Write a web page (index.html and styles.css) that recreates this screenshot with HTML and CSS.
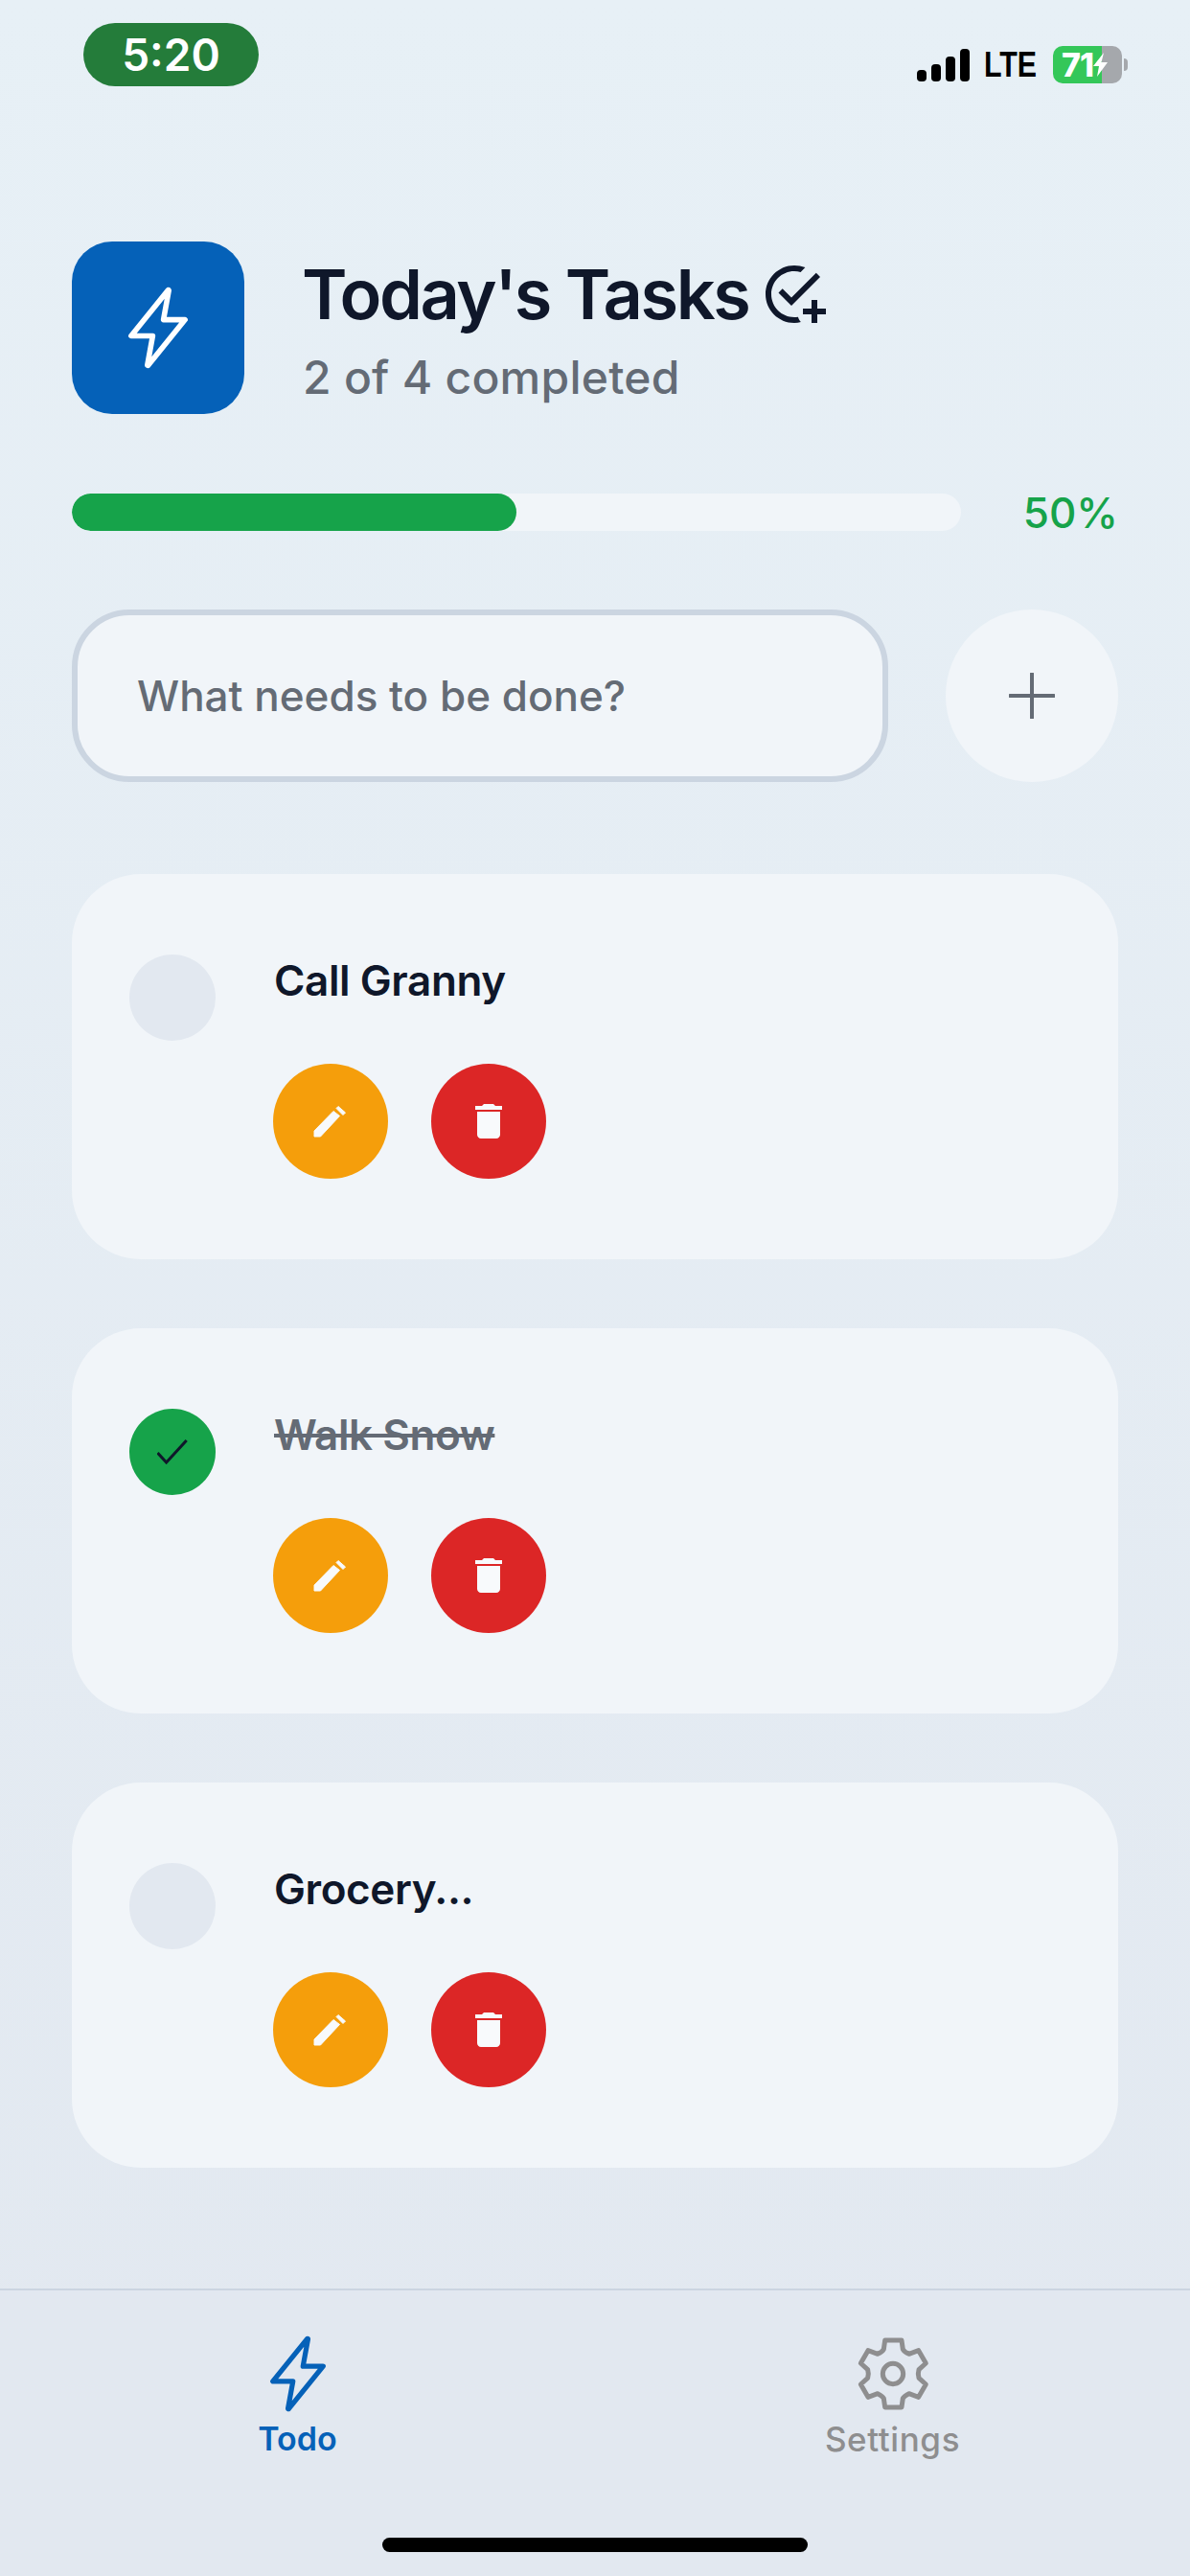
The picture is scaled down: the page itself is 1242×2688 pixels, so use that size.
FILE: index.html
```html
<!DOCTYPE html>
<html lang="en">
<head>
    <meta charset="UTF-8">
    <meta name="viewport" content="width=device-width, initial-scale=1.0">
    <title>Today's Tasks</title>
    <link rel="stylesheet" href="styles.css">
</head>
<body>
    <div class="app">
        <!-- Status bar -->
        <div class="status-bar">
            <div class="time-pill">5:20</div>
            <div class="status-right">
                <div class="signal">
                    <span class="bar bar-1"></span>
                    <span class="bar bar-2"></span>
                    <span class="bar bar-3"></span>
                    <span class="bar bar-4"></span>
                </div>
                <span class="lte">LTE</span>
                <div class="battery">
                    <div class="battery-body">
                        <span class="battery-num">71</span>
                        <svg class="battery-bolt" viewBox="0 0 15 25"><path d="M11 0 0 14h6L4 25l11-15H8.5z" fill="#fff"/></svg>
                    </div>
                    <span class="battery-cap"></span>
                </div>
            </div>
        </div>

        <main class="content">
            <!-- Header -->
            <header class="header">
                <div class="logo">
                    <svg class="logo-icon" viewBox="0 0 512 512"><path d="M315.27 33 96 304h128l-31.51 173.23a2.36 2.36 0 0 0 2.33 2.77h0a2.36 2.36 0 0 0 1.89-.95L416 208H288l31.66-173.25a2.45 2.45 0 0 0-2.44-2.75h0a2.42 2.42 0 0 0-1.95 1z"/></svg>
                </div>
                <div class="header-text">
                    <div class="title-row">
                        <h1 class="title">Today's Tasks</h1>
                        <svg class="title-icon" viewBox="0 0 24 24"><path d="M14.3 21.7C13.6 21.9 12.8 22 12 22C6.5 22 2 17.5 2 12S6.5 2 12 2C13.3 2 14.6 2.3 15.8 2.7L14.2 4.3C13.5 4.1 12.8 4 12 4C7.6 4 4 7.6 4 12S7.6 20 12 20C12.4 20 12.9 20 13.3 19.9C13.5 20.6 13.9 21.2 14.3 21.7M7.9 10.1L6.5 11.5L11 16L21 6L19.6 4.6L11 13.2L7.9 10.1M18 14V17H15V19H18V22H20V19H23V17H20V14H18Z"/></svg>
                    </div>
                    <p class="subtitle">2 of 4 completed</p>
                </div>
            </header>

            <!-- Progress -->
            <div class="progress-row">
                <div class="progress-track"><div class="progress-fill"></div></div>
                <span class="progress-label">50%</span>
            </div>

            <!-- New task -->
            <div class="add-row">
                <div class="task-input">What needs to be done?</div>
                <button class="add-btn">
                    <svg viewBox="0 0 48 48"><path d="M24 1v46M1 24h46"/></svg>
                </button>
            </div>

            <!-- Task list -->
            <section class="task-list">
                <article class="task-card">
                    <span class="check"></span>
                    <div class="task-body">
                        <div class="task-name">Call Granny</div>
                        <div class="task-actions">
                            <button class="round-btn edit"><svg class="edit-icon" viewBox="0 0 36 34"><path d="M1 27 21 6.5 27.5 11.5 7.5 33H1zM24 3.5 26 1.5 33.5 8 31 10.5z"/></svg></button>
                            <button class="round-btn remove"><svg class="remove-icon" viewBox="0 0 24 24"><path d="M6 19c0 1.1.9 2 2 2h8c1.1 0 2-.9 2-2V7H6v12zM19 4h-3.5l-1-1h-5l-1 1H5v2h14V4z"/></svg></button>
                        </div>
                    </div>
                </article>

                <article class="task-card">
                    <span class="check done">
                        <svg viewBox="0 0 32 26"><path d="M.5 14 9.6 24 30.7 1"/></svg>
                    </span>
                    <div class="task-body">
                        <div class="task-name struck">Walk Snow</div>
                        <div class="task-actions">
                            <button class="round-btn edit"><svg class="edit-icon" viewBox="0 0 36 34"><path d="M1 27 21 6.5 27.5 11.5 7.5 33H1zM24 3.5 26 1.5 33.5 8 31 10.5z"/></svg></button>
                            <button class="round-btn remove"><svg class="remove-icon" viewBox="0 0 24 24"><path d="M6 19c0 1.1.9 2 2 2h8c1.1 0 2-.9 2-2V7H6v12zM19 4h-3.5l-1-1h-5l-1 1H5v2h14V4z"/></svg></button>
                        </div>
                    </div>
                </article>

                <article class="task-card">
                    <span class="check"></span>
                    <div class="task-body">
                        <div class="task-name">Grocery...</div>
                        <div class="task-actions">
                            <button class="round-btn edit"><svg class="edit-icon" viewBox="0 0 36 34"><path d="M1 27 21 6.5 27.5 11.5 7.5 33H1zM24 3.5 26 1.5 33.5 8 31 10.5z"/></svg></button>
                            <button class="round-btn remove"><svg class="remove-icon" viewBox="0 0 24 24"><path d="M6 19c0 1.1.9 2 2 2h8c1.1 0 2-.9 2-2V7H6v12zM19 4h-3.5l-1-1h-5l-1 1H5v2h14V4z"/></svg></button>
                        </div>
                    </div>
                </article>
            </section>
        </main>

        <!-- Tab bar -->
        <nav class="tab-bar">
            <div class="tabs">
                <div class="tab active">
                    <svg class="tab-icon" viewBox="0 0 512 512"><path d="M315.27 33 96 304h128l-31.51 173.23a2.36 2.36 0 0 0 2.33 2.77h0a2.36 2.36 0 0 0 1.89-.95L416 208H288l31.66-173.25a2.45 2.45 0 0 0-2.44-2.75h0a2.42 2.42 0 0 0-1.95 1z"/></svg>
                    <span class="tab-label">Todo</span>
                </div>
                <div class="tab">
                    <svg class="tab-icon gear" viewBox="29 19 252 252">
                        <path d="M130 40H182L186 68Q190 76 205 83L235 72 258 112 236 132Q232 145 236 158L258 178 235 218 205 207Q190 214 186 222L182 250H130L126 222Q122 214 107 207L77 218 54 178 76 158Q80 145 76 132L54 112 77 72 107 83Q122 76 126 68Z"/>
                        <circle cx="155" cy="145" r="32"/>
                    </svg>
                    <span class="tab-label">Settings</span>
                </div>
            </div>
            <div class="home-indicator"></div>
        </nav>
    </div>
</body>
</html>
```

FILE: styles.css
```css
* {
    margin: 0;
    padding: 0;
    box-sizing: border-box;
    font-family: Inter, 'Noto Sans', sans-serif;
}

html, body {
    height: 100%;
}

.app {
    height: 2688px;
    display: flex;
    flex-direction: column;
    background: linear-gradient(180deg, #e7f0f6 0%, #e2e8f0 100%);
    overflow: hidden;
}

/* Status bar */
.status-bar {
    height: 252px;
    flex-shrink: 0;
    display: flex;
    justify-content: space-between;
    align-items: flex-start;
    padding: 24px 65px 0 87px;
}

.time-pill {
    width: 183px;
    height: 66px;
    border-radius: 33px;
    background: #247c3a;
    color: #fff;
    font-size: 46px;
    font-weight: 600;
    line-height: 66px;
    text-align: center;
}

.status-right {
    display: flex;
    align-items: center;
    margin-top: 24px;
    height: 39px;
}

.signal {
    display: flex;
    align-items: flex-end;
    gap: 5px;
    margin-right: 15px;
}

.bar {
    width: 10px;
    background: #000;
    border-radius: 4px;
}

.bar-1 { height: 12px; }
.bar-2 { height: 18px; }
.bar-3 { height: 26px; }
.bar-4 { height: 34px; }

.lte {
    width: 58px;
    font-family: 'Liberation Sans', sans-serif;
    font-size: 37px;
    font-weight: 700;
    line-height: 39px;
    color: #000;
    margin-right: 14px;
    transform: scaleX(0.82);
    transform-origin: left center;
}

.battery {
    display: flex;
    align-items: center;
}

.battery-body {
    width: 72px;
    height: 39px;
    border-radius: 10px;
    background: linear-gradient(90deg, #34c759 0%, #34c759 71%, #a5a8ac 71%, #a5a8ac 100%);
    display: flex;
    align-items: center;
    padding-left: 9px;
}

.battery-num {
    font-size: 34px;
    font-weight: 800;
    letter-spacing: -1px;
    color: #fff;
    line-height: 39px;
}

.battery-bolt {
    width: 15px;
    height: 25px;
    flex-shrink: 0;
}

.battery-cap {
    width: 4px;
    height: 13px;
    margin-left: 2px;
    border-radius: 0 4px 4px 0;
    background: #a5a8ac;
}

/* Main */
.content {
    flex: 1;
    padding: 0 75px;
}

.header {
    display: flex;
    align-items: flex-start;
    gap: 60px;
}

.logo {
    width: 180px;
    height: 180px;
    border-radius: 42px;
    background: #0561b8;
    display: flex;
    align-items: center;
    justify-content: center;
}

.logo-icon {
    width: 90px;
    height: 90px;
    fill: none;
    stroke: #fff;
    stroke-width: 32;
    stroke-linecap: round;
    stroke-linejoin: round;
}

.header-text {
    padding-top: 11px;
}

.title-row {
    display: flex;
    align-items: center;
    gap: 12px;
}

.title {
    font-size: 72px;
    font-weight: 600;
    letter-spacing: -2.4px;
    line-height: 88px;
    color: #0f172a;
}

.title-icon {
    width: 72px;
    height: 72px;
    fill: #0f172a;
}

.subtitle {
    font-size: 48px;
    font-weight: 500;
    letter-spacing: 0.25px;
    line-height: 58px;
    margin-top: 14px;
    padding-left: 1px;
    color: #646b75;
}

.progress-row {
    display: flex;
    align-items: center;
    margin-top: 83px;
    height: 39px;
}

.progress-track {
    width: 928px;
    height: 39px;
    border-radius: 20px;
    background: #f1f5f9;
    overflow: hidden;
}

.progress-fill {
    width: 50%;
    height: 100%;
    border-radius: 20px;
    background: #16a34a;
}

.progress-label {
    margin-left: auto;
    font-size: 44px;
    font-weight: 500;
    color: #16a34a;
}

.add-row {
    display: flex;
    justify-content: space-between;
    margin-top: 82px;
}

.task-input {
    width: 852px;
    height: 180px;
    border: 6px solid #cbd5e1;
    border-radius: 60px;
    background: #f1f5f9;
    padding-left: 62px;
    display: flex;
    align-items: center;
    font-size: 44px;
    font-weight: 500;
    color: #646b75;
}

.add-btn {
    width: 180px;
    height: 180px;
    border: none;
    border-radius: 50%;
    background: #f1f5f9;
    display: flex;
    align-items: center;
    justify-content: center;
}

.add-btn svg {
    width: 48px;
    height: 48px;
    fill: none;
    stroke: #646b75;
    stroke-width: 4;
    stroke-linecap: round;
}

.task-list {
    display: flex;
    flex-direction: column;
    gap: 72px;
    margin-top: 96px;
}

.task-card {
    height: 402px;
    display: flex;
    gap: 60px;
    padding: 84px 60px;
    border-radius: 72px;
    background: #f1f5f9;
}

.check {
    width: 90px;
    height: 90px;
    flex-shrink: 0;
    border-radius: 50%;
    background: #e2e8f0;
    display: flex;
    align-items: center;
    justify-content: center;
}

.check.done {
    background: #16a34a;
}

.check svg {
    width: 32px;
    height: 26px;
    fill: none;
    stroke: #0f172a;
    stroke-width: 3;
}

.task-name {
    font-size: 44px;
    font-weight: 600;
    letter-spacing: -0.4px;
    line-height: 54px;
    height: 54px;
    padding-left: 1px;
    color: #0f172a;
}

.task-name.struck {
    color: #646b75;
    text-decoration: line-through;
}

.task-actions {
    display: flex;
    gap: 45px;
    margin-top: 60px;
}

.round-btn {
    width: 120px;
    height: 120px;
    border: none;
    border-radius: 50%;
    display: flex;
    align-items: center;
    justify-content: center;
}

.round-btn.edit { background: #f59e0b; }
.round-btn.remove { background: #dc2626; }

.edit-icon {
    width: 36px;
    height: 34px;
    fill: #f8fafc;
    stroke: #f8fafc;
    stroke-width: 1;
    stroke-linejoin: round;
}

.remove-icon {
    width: 48px;
    height: 48px;
    fill: #f8fafc;
}

/* Tab bar */
.tab-bar {
    height: 300px;
    flex-shrink: 0;
    background: #e2e8f0;
    border-top: 2px solid #cbd5e1;
    display: flex;
    flex-direction: column;
    align-items: center;
}

.tabs {
    width: 100%;
    display: flex;
    padding-top: 45px;
}

.tab {
    flex: 1;
    display: flex;
    flex-direction: column;
    align-items: center;
    color: #8e8e8f;
}

.tab.active {
    color: #0561b8;
}

.tab-icon {
    width: 84px;
    height: 84px;
    fill: none;
    stroke: currentColor;
    stroke-width: 32;
    stroke-linecap: round;
    stroke-linejoin: round;
}

.tab-icon.gear {
    stroke-width: 15;
}

.tab-label {
    font-size: 35px;
    font-weight: 500;
    letter-spacing: 0.6px;
    line-height: 40px;
    margin-top: 6px;
}

.tab.active .tab-label {
    font-size: 34px;
    font-weight: 600;
    letter-spacing: 0;
}

.home-indicator {
    width: 444px;
    height: 15px;
    margin-top: 83px;
    border-radius: 8px;
    background: #000;
}
```
